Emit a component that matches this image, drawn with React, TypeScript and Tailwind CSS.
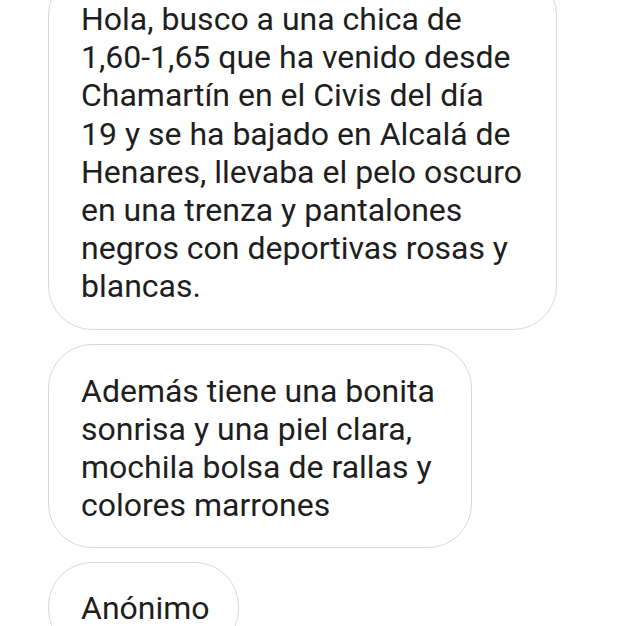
import React from "react";

const Bubble = ({ lines, className }: { lines: string[]; className: string }) => (
  <div className={`border-[1.5px] border-[#d9d9d9] rounded-[44px] bg-white pl-8 ${className}`}>
    {lines.map((l, i) => (
      <div key={i} className="whitespace-nowrap">{l}</div>
    ))}
  </div>
);

export default function App() {
  return (
    <div
      className="w-[626px] h-[626px] overflow-hidden bg-white text-[#1e1e1e] text-[32px] leading-[38.2px]"
      style={{ fontFamily: "Roboto, 'Noto Sans', sans-serif" }}
    >
      <div className="flex flex-col items-start gap-[14px] pl-[48px] -mt-[29px]">
        <Bubble
          className="w-[509px] pt-[28px] pb-[23px]"
          lines={[
            "Hola, busco a una chica de",
            "1,60-1,65 que ha venido desde",
            "Chamartín en el Civis del día",
            "19 y se ha bajado en Alcalá de",
            "Henares, llevaba el pelo oscuro",
            "en una trenza y pantalones",
            "negros con deportivas rosas y",
            "blancas.",
          ]}
        />
        <Bubble
          className="w-[424px] pt-[27px] pb-[23px]"
          lines={[
            "Además tiene una bonita",
            "sonrisa y una piel clara,",
            "mochila bolsa de rallas y",
            "colores marrones",
          ]}
        />
        <Bubble className="w-[191px] pt-[26px] pb-[24px]" lines={["Anónimo"]} />
      </div>
    </div>
  );
}
